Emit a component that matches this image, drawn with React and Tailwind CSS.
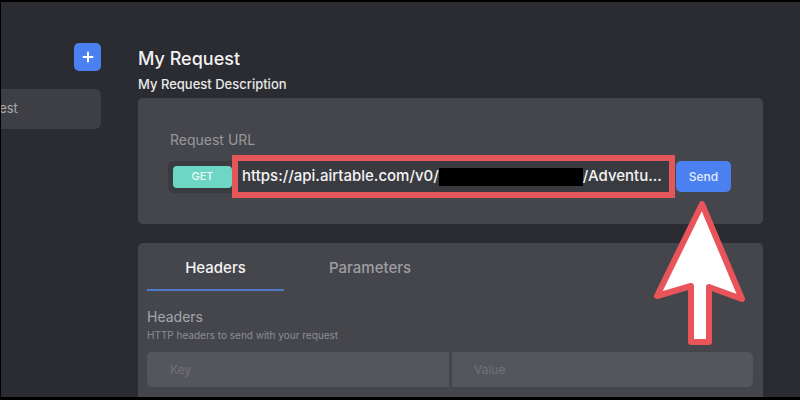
import React from 'react';

const Arrow = () => (
  <svg className="absolute left-0 top-0 pointer-events-none" width="800" height="400" viewBox="0 0 800 400">
    <path
      d="M702 204 L657 296 L691 286 L691 342 L709 342 L709 287 L742 299 Z"
      fill="#ffffff"
      stroke="#e9535a"
      strokeWidth="6"
      strokeLinejoin="round"
    />
  </svg>
);

const App = () => {
  return (
    <div
      className="relative w-[800px] h-[400px] bg-black pt-[2px] pb-[3px] pl-[1px] overflow-hidden"
      style={{ fontFamily: 'Inter, "Noto Sans", sans-serif' }}
    >
      <div className="flex h-full bg-[#2b2c31]">
        {/* sidebar */}
        <div className="w-[100px] flex flex-col">
          <button className="self-end mt-[41px] w-[27px] h-[28px] rounded-[5px] bg-[#4b80f0] flex items-center justify-center">
            <svg width="12" height="12" viewBox="0 0 12 12">
              <path d="M6 1.5v9M1.5 6h9" stroke="#fff" strokeWidth="2" strokeLinecap="round" />
            </svg>
          </button>
          <div className="mt-[18px] h-[40px] rounded-r-[6px] bg-[#3e3f44] overflow-hidden flex items-center">
            <span className="-ml-[56px] whitespace-nowrap text-[13px] text-[#a9aab0]">My Request</span>
          </div>
        </div>

        {/* main */}
        <div className="ml-[37px] w-[625px] flex flex-col">
          <h1 className="mt-[45px] text-[18px] leading-[24px] font-medium text-[#f2f2f3]">My Request</h1>
          <p className="mt-[4px] text-[13px] leading-[18px] font-medium text-[#e9e9ea]">My Request Description</p>

          <div className="mt-[5px] h-[126px] rounded-[5px] bg-[#45464b] pl-[30px] pt-[32px]">
            <div className="ml-[2px] text-[14px] leading-[20px] text-[#96979c]">Request URL</div>
            <div className="mt-[5px] flex items-center">
              <div className="h-[32px] w-[64px] pl-[5px] flex items-center rounded-l-[6px] bg-[#3a3b40]">
                <div className="w-[59px] h-[22px] rounded-[4px] bg-[#6dd6c4] flex items-center justify-center text-[11px] font-medium text-[#eafbf7]">
                  GET
                </div>
              </div>
              <div className="w-[443px] h-[43px] border-[6px] border-[#e5565a] bg-[#3a3b40] pl-[4px] flex items-center overflow-hidden whitespace-nowrap text-[15px] font-medium text-[#f4f4f5]">
                <span>https://api.airtable.com/v0/</span>
                <span className="inline-block w-[144px] h-[18px] bg-black"></span>
                <span>/Adventu...</span>
              </div>
              <button className="ml-[1px] w-[55px] h-[31px] rounded-[5px] bg-[#4b80f0] text-[12px] font-medium text-[#e3ebfd]">
                Send
              </button>
            </div>
          </div>

          <div className="mt-[19px] flex-1 rounded-t-[5px] bg-[#45464b] pl-[9px] pr-[10px] pt-[15px]">
            <div className="flex">
              <div className="w-[137px] pb-[11px] border-b-2 border-[#4f78c8] text-center text-[15px] leading-[20px] font-medium text-[#f4f4f5]">
                Headers
              </div>
              <div className="pl-[45px] text-[15px] leading-[20px] font-medium text-[#9d9ea3]">Parameters</div>
            </div>
            <div className="mt-[16px] text-[14px] leading-[20px] text-[#a5a6ab]">Headers</div>
            <div className="mt-[1px] text-[10px] leading-[14px] text-[#8c8d92]">HTTP headers to send with your request</div>
            <div className="mt-[10px] flex gap-[3px]">
              <div className="flex-1 h-[35px] rounded-l-[5px] bg-[#55565b] pl-[23px] flex items-center text-[12px] text-[#717278]">Key</div>
              <div className="flex-1 h-[35px] rounded-r-[5px] bg-[#55565b] pl-[22px] flex items-center text-[12px] text-[#717278]">Value</div>
            </div>
          </div>
        </div>
      </div>
      <Arrow />
    </div>
  );
};

export default App;
